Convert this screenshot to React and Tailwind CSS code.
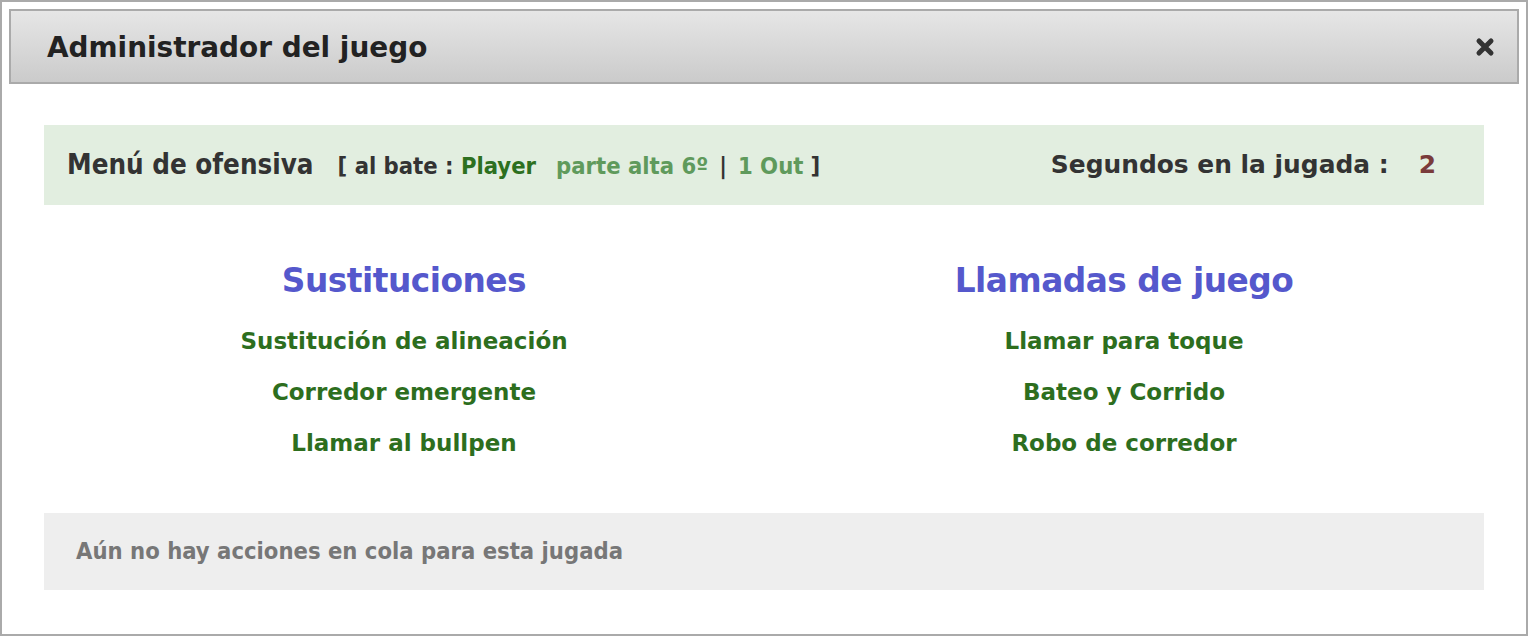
export default function App() {
  const v = { fontFamily: '"DejaVu Sans", Verdana, sans-serif' };
  const c = { fontFamily: '"DejaVu Sans Condensed", "DejaVu Sans", sans-serif', fontStretch: 'condensed' };
  return (
    <div className="w-[1528px] h-[636px] bg-white border-2 border-[#aaaaaa] box-border px-[7px] pt-[7px] font-bold" style={v}>
      <div className="h-[75px] border-2 border-[#aaaaaa] bg-gradient-to-b from-[#e6e6e6] to-[#cbcbcb] flex items-center justify-between pl-[36px] pr-[22px]">
        <div className="text-[27.9px] text-[#222222] leading-none mt-[3px]">Administrador del juego</div>
        <svg width="20" height="20" viewBox="0 0 20 20">
          <path d="M4 4 L16 16 M16 4 L4 16" stroke="#333333" strokeWidth="5" strokeLinecap="round" />
        </svg>
      </div>
      <div className="px-[35px] pt-[41px]">
        <div className="h-[80px] bg-[#e2eee0] flex items-center justify-between pl-[23px] pr-[48px]">
          <div className="flex items-baseline" style={c}>
            <span className="text-[27.5px] text-[#333333]">Menú de ofensiva</span>
            <span className="text-[23.6px] text-[#333333] ml-[24px]">[ al bate : <span className="text-[#2d7020]">Player</span></span>
            <span className="text-[23.6px] text-[#5f9a5c] ml-[20px]">parte alta 6º</span>
            <span className="text-[23.6px] text-[#333333] ml-[11px]">|</span>
            <span className="text-[23.6px] text-[#5f9a5c] ml-[11px]">1 Out</span>
            <span className="text-[23.6px] text-[#333333] ml-[7px]">]</span>
          </div>
          <div className="flex items-baseline">
            <span className="text-[24.9px] text-[#333333]">Segundos en la jugada :</span>
            <span className="text-[24.9px] text-[#7a3b3b] ml-[30px]">2</span>
          </div>
        </div>
        <div className="grid grid-cols-2 pt-[53px] pb-[44px]">
          <div className="flex flex-col items-center">
            <div className="text-[32.8px] text-[#5558cc] leading-[46px] tracking-[-0.5px]">Sustituciones</div>
            <div className="flex flex-col items-center text-[23px] text-[#2d6e1e] leading-[51px] mt-[12px]">
              <div>Sustitución de alineación</div>
              <div>Corredor emergente</div>
              <div>Llamar al bullpen</div>
            </div>
          </div>
          <div className="flex flex-col items-center">
            <div className="text-[32.8px] text-[#5558cc] leading-[46px] tracking-[-0.5px]">Llamadas de juego</div>
            <div className="flex flex-col items-center text-[23px] text-[#2d6e1e] leading-[51px] mt-[12px]">
              <div>Llamar para toque</div>
              <div>Bateo y Corrido</div>
              <div>Robo de corredor</div>
            </div>
          </div>
        </div>
        <div className="h-[77px] bg-[#eeeeee] flex items-center pl-[32px]">
          <span className="text-[23.6px] text-[#777777]" style={c}>Aún no hay acciones en cola para esta jugada</span>
        </div>
      </div>
    </div>
  );
}
